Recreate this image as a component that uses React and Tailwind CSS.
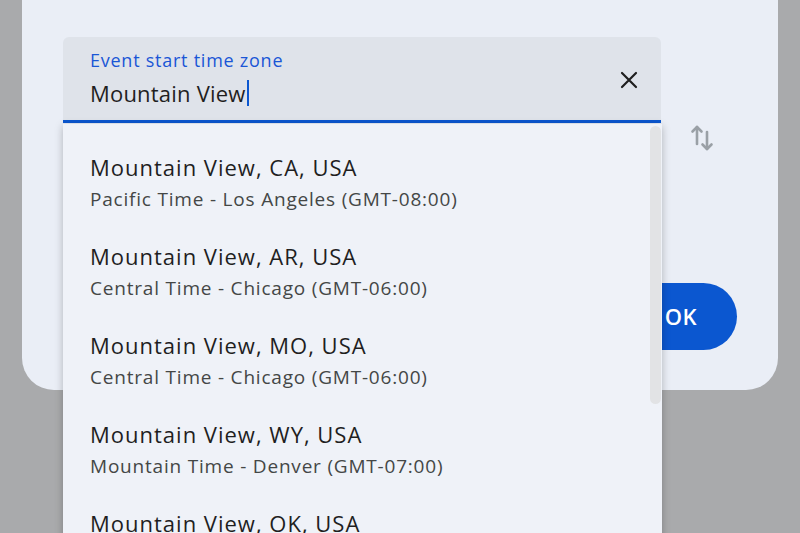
import React from 'react';

const RESULTS = [
  { place: 'Mountain View, CA, USA', zone: 'Pacific Time - Los Angeles (GMT-08:00)' },
  { place: 'Mountain View, AR, USA', zone: 'Central Time - Chicago (GMT-06:00)' },
  { place: 'Mountain View, MO, USA', zone: 'Central Time - Chicago (GMT-06:00)' },
  { place: 'Mountain View, WY, USA', zone: 'Mountain Time - Denver (GMT-07:00)' },
  { place: 'Mountain View, OK, USA', zone: 'Central Time - Chicago (GMT-06:00)' },
];

const SwapIcon = () => (
  <svg width="26" height="30" viewBox="0 0 26 30" fill="none" stroke="#9aa0a6" strokeWidth="2.6" strokeLinecap="round" strokeLinejoin="round">
    <path d="M8 21V4" />
    <path d="M3.5 8.5L8 4l4.5 4.5" />
    <path d="M18 9v17" />
    <path d="M13.5 21.5L18 26l4.5-4.5" />
  </svg>
);

const App = () => {
  return (
    <div className="relative w-[800px] h-[533px] overflow-hidden bg-[#a9aaac]" style={{ fontFamily: '"Open Sans", "Noto Sans", sans-serif' }}>
      {/* dialog card */}
      <div className="mx-[22px] h-[390px] rounded-b-[32px] bg-[#eaeef6] pt-[37px] pl-[41px] pr-[41px]">
        <div className="flex">
          <div className="w-[598px] h-[86px] rounded-t-[6px] bg-[#dfe3ea] border-b-[3px] border-[#0b57d0] flex items-start justify-between">
            <div className="pl-[27px] pt-[10px]">
              <div className="text-[18px] leading-[26px] text-[#1a56d6] tracking-[0.75px]">Event start time zone</div>
              <div className="text-[22px] leading-[30px] text-[#1f1f1f] mt-[5px] flex items-center tracking-[0.2px]">
                Mountain View<span className="inline-block w-[2px] h-[26px] bg-[#0b57d0] ml-[1px]"></span>
              </div>
            </div>
            <button className="mr-[20px] mt-[31px] w-[24px] h-[24px] flex items-center justify-center">
              <svg width="20" height="20" viewBox="0 0 20 20" stroke="#1f1f1f" strokeWidth="2.2" strokeLinecap="round">
                <path d="M3 3l14 14M17 3L3 17" />
              </svg>
            </button>
          </div>
          <div className="ml-[28px] mt-[86px]">
            <SwapIcon />
          </div>
        </div>
        <div className="flex justify-end mt-[130px]">
          <button className="h-[67px] w-[160px] rounded-full bg-[#0b57d0] text-white text-[22px] font-semibold flex items-center justify-end pr-[40px] tracking-[0.5px]">
            OK
          </button>
        </div>
      </div>

      {/* suggestions menu */}
      <div className="absolute left-[63px] top-[124px] w-[599px] h-[420px] bg-[#eff2f8] shadow-[0_2px_8px_rgba(0,0,0,0.25)]">
        <div className="absolute right-[1px] top-[2px] w-[11px] h-[278px] rounded-full bg-[#e2e3e5]"></div>
        <div className="pt-[28px]">
          {RESULTS.map((r) => (
            <div key={r.place} className="pl-[27px] h-[89px]">
              <div className="text-[22px] leading-[30px] text-[#1f1f1f] tracking-[1px]">{r.place}</div>
              <div className="text-[19px] leading-[26px] text-[#444746] mt-[4px] tracking-[0.8px]">{r.zone}</div>
            </div>
          ))}
        </div>
      </div>
    </div>
  );
};

export default App;
